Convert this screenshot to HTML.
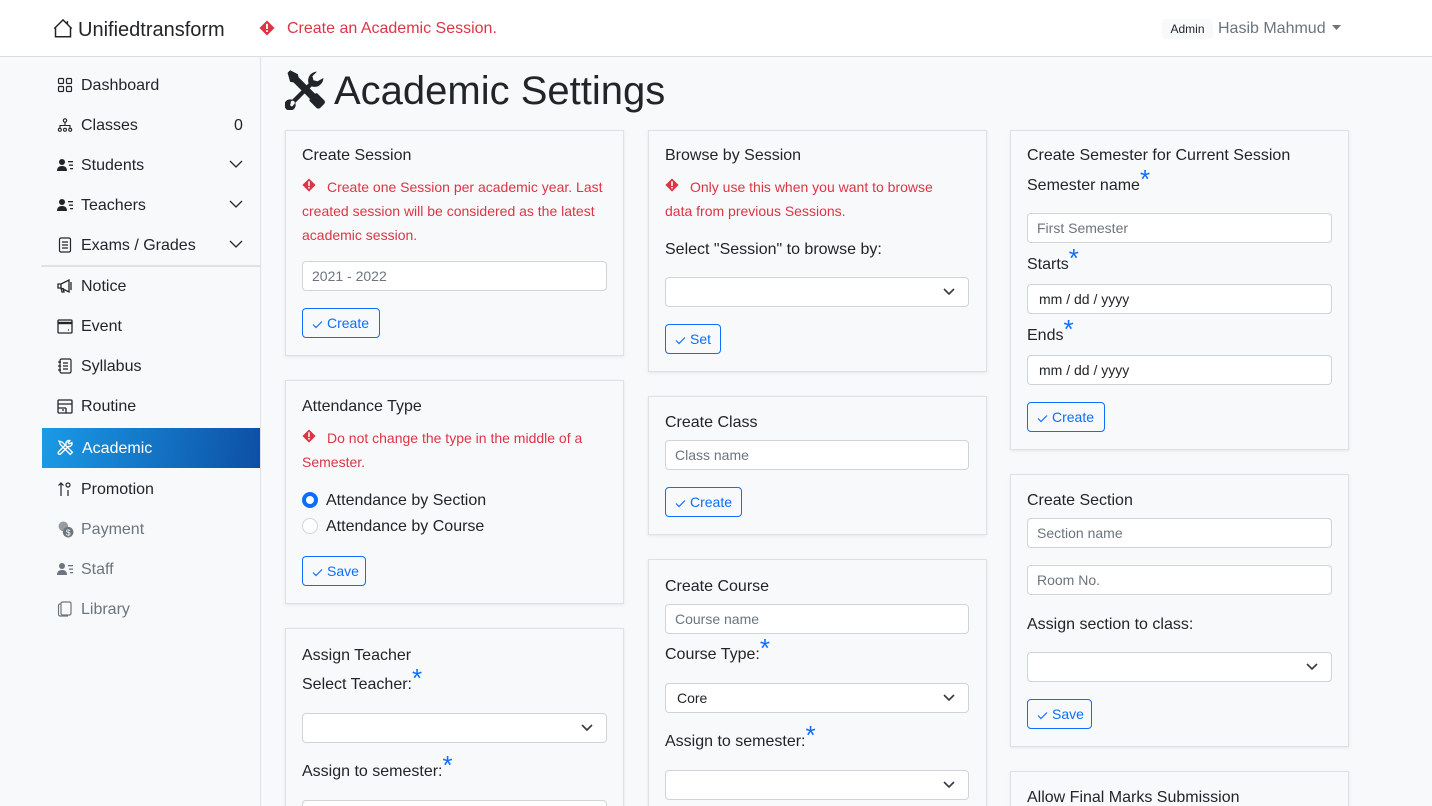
<!DOCTYPE html>
<html><head><meta charset="utf-8"><style>
*{box-sizing:border-box;margin:0;padding:0}
html{width:1432px;height:806px;overflow:hidden}
body{width:1432px;height:806px;overflow:hidden;background:#f8f9fa;font-family:"Liberation Sans",sans-serif;color:#212529;position:relative}
.a{position:absolute}
.t{position:absolute;white-space:nowrap;line-height:24px;height:25px;padding-top:1px}
.nav{left:0;top:0;width:1432px;height:57px;background:#fff;border-bottom:1px solid #dadde0}
.side{left:0;top:57px;width:261px;height:749px;border-right:1px solid #dee2e6}
.si{font-size:16px}
.card{position:absolute;background:#f8f9fa;border:1px solid #dee2e6;box-shadow:0 1px 3px rgba(0,0,0,.08)}
.h{font-size:16px}
.w{font-size:14px;color:#dc3545}
.in{position:absolute;background:#fff;border:1px solid #ced4da;border-radius:4px;height:30px;font-size:14px;color:#6c757d;padding-left:9px;line-height:29px}
.in.d{color:#212529;padding-left:11px}
.sel{position:absolute;background:#fff;border:1px solid #ced4da;border-radius:4px;height:30px;font-size:14px;padding-left:11px;line-height:29px}
.sel svg{position:absolute;right:13px;top:10px}
.btn{position:absolute;border:1px solid #0d6efd;border-radius:4px;height:30px;color:#0d6efd;font-size:14px;line-height:29px;padding-left:9px}
.btn svg{vertical-align:-1px;margin-right:4px}
.star{color:#0d6efd;font-size:26px;vertical-align:2px;line-height:0}
.ic{position:absolute}
</style></head><body>
<div class="a nav"></div>
<svg class="ic" style="left:53px;top:18px" width="20" height="20" viewBox="0 0 16 16" fill="none" stroke="#212529" stroke-width="1.2"><path d="M2 7.5V15h12V7.5M1 8.5L8 1.5l7 7M11.5 2.5v2.5"/></svg>
<div class="t" style="left:78px;top:17px;font-size:20px;line-height:24px">Unifiedtransform</div>
<svg class="ic" style="left:259px;top:20px" width="16" height="16" viewBox="0 0 16 16"><path d="M8 0.5l7.5 7.5L8 15.5 0.5 8z" fill="#dc3545"/><rect x="7.1" y="3.8" width="1.8" height="5.2" fill="#fff"/><rect x="7.1" y="10.2" width="1.8" height="1.8" fill="#fff"/></svg>
<div class="t" style="left:287px;top:16px;font-size:16px;color:#dc3545">Create an Academic Session.</div>
<div class="a" style="left:1162px;top:19px;width:51px;height:20px;background:#f8f9fa;border-radius:4px;font-size:12px;line-height:21px;text-align:center">Admin</div>
<div class="t" style="left:1218px;top:16px;font-size:16px;color:#6c757d">Hasib Mahmud</div>
<svg class="ic" style="left:1332px;top:25px" width="10" height="6"><path d="M0 0h9l-4.5 5z" fill="#6c757d"/></svg>

<div class="a side"></div>
<div class="a" style="left:41px;top:265px;width:219px;height:2px;background:#dee2e6"></div>
<div class="a" style="left:42px;top:428px;width:218px;height:40px;background:linear-gradient(100deg,#1a9be6,#0d4fa5)"></div>

<svg class="ic" style="left:57px;top:77px" width="16" height="16" viewBox="0 0 16 16" fill="none" stroke="#212529" stroke-width="1.2"><rect x="1.5" y="1.5" width="5" height="5" rx="1"/><rect x="9.5" y="1.5" width="5" height="5" rx="1"/><rect x="1.5" y="9.5" width="5" height="5" rx="1"/><rect x="9.5" y="9.5" width="5" height="5" rx="1"/></svg>
<svg class="ic" style="left:57px;top:117px" width="16" height="16" viewBox="0 0 16 16" fill="none" stroke="#212529" stroke-width="1.1"><circle cx="8" cy="3.5" r="1.7"/><path d="M8 5.3v3M3 11V8.5h10V11"/><circle cx="2.8" cy="12.8" r="1.5"/><circle cx="8" cy="12.8" r="1.5"/><circle cx="13.2" cy="12.8" r="1.5"/></svg>
<svg class="ic" style="left:57px;top:157px" width="17" height="16" viewBox="0 0 17 16" fill="#212529"><circle cx="5" cy="5" r="3"/><path d="M0 14c0-4 2.5-5 5-5s5 1 5 5z"/><rect x="11" y="4" width="5" height="1.3"/><rect x="12" y="7.5" width="4" height="1.3"/><rect x="13" y="11" width="3" height="1.3"/></svg>
<svg class="ic" style="left:57px;top:197px" width="17" height="16" viewBox="0 0 17 16" fill="#212529"><circle cx="5" cy="5" r="3"/><path d="M0 14c0-4 2.5-5 5-5s5 1 5 5z"/><rect x="11" y="4" width="5" height="1.3"/><rect x="12" y="7.5" width="4" height="1.3"/><rect x="13" y="11" width="3" height="1.3"/></svg>
<svg class="ic" style="left:57px;top:237px" width="16" height="16" viewBox="0 0 16 16" fill="none" stroke="#212529" stroke-width="1.2"><rect x="2.5" y="1" width="11" height="14" rx="1.5"/><path d="M5 5h6M5 8h6M5 11h6"/></svg>
<svg class="ic" style="left:57px;top:278px" width="16" height="16" viewBox="0 0 16 16" fill="none" stroke="#212529" stroke-width="1.3"><path d="M1 6h3l8-4v12l-8-4H1zM4 6v4M4 10l1 4h2l-1-4M14 4v8"/></svg>
<svg class="ic" style="left:57px;top:318px" width="16" height="16" viewBox="0 0 16 16" fill="none" stroke="#212529" stroke-width="1.3"><rect x="1" y="2" width="14" height="13" rx="1"/><path d="M1 5h14" stroke-width="2.4"/><path d="M11 12h1"/></svg>
<svg class="ic" style="left:57px;top:358px" width="16" height="16" viewBox="0 0 16 16" fill="none" stroke="#212529" stroke-width="1.2"><rect x="3" y="1" width="11" height="14" rx="1.5"/><path d="M1 4h3M1 8h3M1 12h3M6 5h5M6 8h5M6 11h5"/></svg>
<svg class="ic" style="left:57px;top:398px" width="16" height="16" viewBox="0 0 16 16" fill="none" stroke="#212529" stroke-width="1.3"><rect x="1" y="2" width="14" height="13" rx="1"/><path d="M1 6h14M1 10h8M9 10v5M5 12h2"/></svg>
<svg class="ic" style="left:57px;top:439px" width="17" height="17" viewBox="0 0 16 16" fill="none" stroke="#fff" stroke-width="1.3"><path d="M2 2l3 1 8 8 1.5 1.5-2 2L11 13 3 5z"/><path d="M14 3.5a2.8 2.8 0 0 1-3.5 3.5L3.5 14a1.3 1.3 0 0 1-2-2l7-7A2.8 2.8 0 0 1 12 1.5l-1.5 2 1 1z"/></svg>
<svg class="ic" style="left:57px;top:481px" width="16" height="16" viewBox="0 0 16 16" fill="none" stroke="#212529" stroke-width="1.2"><path d="M4 15V2M1.5 4.5L4 2l2.5 2.5M11 9v6"/><circle cx="11" cy="4" r="2"/></svg>
<svg class="ic" style="left:57px;top:521px" width="17" height="17" viewBox="0 0 16 16" fill="#6c757d"><circle cx="6" cy="5" r="4.5" opacity=".7"/><circle cx="10.5" cy="10.5" r="5"/><text x="8.3" y="13.5" font-size="8" fill="#fff" font-family="Liberation Sans">$</text></svg>
<svg class="ic" style="left:57px;top:561px" width="17" height="16" viewBox="0 0 17 16" fill="#6c757d"><circle cx="5" cy="5" r="3"/><path d="M0 14c0-4 2.5-5 5-5s5 1 5 5z"/><rect x="11" y="4" width="5" height="1.3"/><rect x="12" y="7.5" width="4" height="1.3"/><rect x="13" y="11" width="3" height="1.3"/></svg>
<svg class="ic" style="left:57px;top:601px" width="16" height="16" viewBox="0 0 16 16" fill="none" stroke="#6c757d" stroke-width="1.2"><rect x="4" y="1" width="10" height="13" rx="1.5"/><path d="M4 3H3a1.5 1.5 0 0 0-1.5 1.5v9A1.5 1.5 0 0 0 3 15h8"/></svg>

<div class="t si" style="left:81px;top:73px">Dashboard</div>
<div class="t si" style="left:81px;top:113px">Classes</div><div class="t si" style="left:234px;top:113px">0</div>
<div class="t si" style="left:81px;top:153px">Students</div>
<div class="t si" style="left:81px;top:193px">Teachers</div>
<div class="t si" style="left:81px;top:233px">Exams / Grades</div>
<svg class="ic" style="left:229px;top:160px" width="14" height="9" fill="none" stroke="#212529" stroke-width="1.3"><path d="M1 1l6 6 6-6"/></svg>
<svg class="ic" style="left:229px;top:200px" width="14" height="9" fill="none" stroke="#212529" stroke-width="1.3"><path d="M1 1l6 6 6-6"/></svg>
<svg class="ic" style="left:229px;top:240px" width="14" height="9" fill="none" stroke="#212529" stroke-width="1.3"><path d="M1 1l6 6 6-6"/></svg>
<div class="t si" style="left:81px;top:274px">Notice</div>
<div class="t si" style="left:81px;top:314px">Event</div>
<div class="t si" style="left:81px;top:354px">Syllabus</div>
<div class="t si" style="left:81px;top:394px">Routine</div>
<div class="t si" style="left:82px;top:436px;color:#fff">Academic</div>
<div class="t si" style="left:81px;top:477px">Promotion</div>
<div class="t si" style="left:81px;top:517px;color:#6c757d">Payment</div>
<div class="t si" style="left:81px;top:557px;color:#6c757d">Staff</div>
<div class="t si" style="left:81px;top:597px;color:#6c757d">Library</div>

<svg class="ic" style="left:285px;top:69px" width="41" height="41" viewBox="0 0 16 16" fill="#212529"><path d="M1 1.5L2 .5l3 1.5 .3 1.2 6.4 6.4.8-.2 2.8 2.8a1 1 0 0 1 0 1.4l-1.6 1.6a1 1 0 0 1-1.4 0L9.5 12.4l.2-.8L3.3 5.2 2 5z"/><path d="M15 3.5a3.5 3.5 0 0 1-4.6 3.3L4 13.2A2.2 2.2 0 1 1 2.8 12L9.2 5.6A3.5 3.5 0 0 1 12.5 1l-1.8 1.8.4 1.6 1.6.4zM3 13.5a.6.6 0 1 0 .1.1z" /><circle cx="3" cy="13.2" r=".8" fill="#f8f9fa"/></svg>
<div class="t" style="left:334px;top:66px;font-size:40px;line-height:48px;height:50px">Academic Settings</div>

<div class="card" style="left:285px;top:130px;width:339px;height:226px"></div>
<div class="t h" style="left:302px;top:143px">Create Session</div>
<svg class="ic" style="left:302px;top:178px" width="14" height="14" viewBox="0 0 16 16"><path d="M8 0.5l7.5 7.5L8 15.5 0.5 8z" fill="#dc3545"/><rect x="7.1" y="3.8" width="1.8" height="5.2" fill="#fff"/><rect x="7.1" y="10.2" width="1.8" height="1.8" fill="#fff"/></svg>
<div class="t w" style="left:327px;top:174px">Create one Session per academic year. Last</div>
<div class="t w" style="left:302px;top:198px">created session will be considered as the latest</div>
<div class="t w" style="left:302px;top:222px">academic session.</div>
<div class="in" style="left:302px;top:261px;width:305px">2021 - 2022</div>
<div class="btn" style="left:302px;top:308px;width:78px"><svg width="11" height="9" fill="none" stroke="#0d6efd" stroke-width="1.2"><path d="M1 4.5l3 3 6-6"/></svg>Create</div>

<div class="card" style="left:285px;top:380px;width:339px;height:224px"></div>
<div class="t h" style="left:302px;top:394px">Attendance Type</div>
<svg class="ic" style="left:302px;top:429px" width="14" height="14" viewBox="0 0 16 16"><path d="M8 0.5l7.5 7.5L8 15.5 0.5 8z" fill="#dc3545"/><rect x="7.1" y="3.8" width="1.8" height="5.2" fill="#fff"/><rect x="7.1" y="10.2" width="1.8" height="1.8" fill="#fff"/></svg>
<div class="t w" style="left:327px;top:425px">Do not change the type in the middle of a</div>
<div class="t w" style="left:302px;top:449px">Semester.</div>
<div class="a" style="left:302px;top:492px;width:16px;height:16px;border-radius:50%;background:#fff;border:4.5px solid #0d6efd"></div>
<div class="a" style="left:302px;top:518px;width:16px;height:16px;border-radius:50%;background:#fff;border:1px solid #ced4da"></div>
<div class="t h" style="left:326px;top:488px">Attendance by Section</div>
<div class="t h" style="left:326px;top:514px">Attendance by Course</div>
<div class="btn" style="left:302px;top:556px;width:64px"><svg width="11" height="9" fill="none" stroke="#0d6efd" stroke-width="1.2"><path d="M1 4.5l3 3 6-6"/></svg>Save</div>

<div class="card" style="left:285px;top:628px;width:339px;height:200px"></div>
<div class="t h" style="left:302px;top:643px">Assign Teacher</div>
<div class="t h" style="left:302px;top:672px">Select Teacher:<span class="star">*</span></div>
<div class="sel" style="left:302px;top:713px;width:305px"><svg width="12" height="8" fill="none" stroke="#343a40" stroke-width="1.6"><path d="M1 1l5 5 5-5"/></svg></div>
<div class="t h" style="left:302px;top:759px">Assign to semester:<span class="star">*</span></div>
<div class="sel" style="left:302px;top:800px;width:305px"></div>

<div class="card" style="left:648px;top:130px;width:339px;height:242px"></div>
<div class="t h" style="left:665px;top:143px">Browse by Session</div>
<svg class="ic" style="left:665px;top:178px" width="14" height="14" viewBox="0 0 16 16"><path d="M8 0.5l7.5 7.5L8 15.5 0.5 8z" fill="#dc3545"/><rect x="7.1" y="3.8" width="1.8" height="5.2" fill="#fff"/><rect x="7.1" y="10.2" width="1.8" height="1.8" fill="#fff"/></svg>
<div class="t w" style="left:690px;top:174px">Only use this when you want to browse</div>
<div class="t w" style="left:665px;top:198px">data from previous Sessions.</div>
<div class="t h" style="left:665px;top:237px">Select "Session" to browse by:</div>
<div class="sel" style="left:665px;top:277px;width:304px"><svg width="12" height="8" fill="none" stroke="#343a40" stroke-width="1.6"><path d="M1 1l5 5 5-5"/></svg></div>
<div class="btn" style="left:665px;top:324px;width:56px"><svg width="11" height="9" fill="none" stroke="#0d6efd" stroke-width="1.2"><path d="M1 4.5l3 3 6-6"/></svg>Set</div>

<div class="card" style="left:648px;top:396px;width:339px;height:139px"></div>
<div class="t h" style="left:665px;top:410px">Create Class</div>
<div class="in" style="left:665px;top:440px;width:304px">Class name</div>
<div class="btn" style="left:665px;top:487px;width:77px"><svg width="11" height="9" fill="none" stroke="#0d6efd" stroke-width="1.2"><path d="M1 4.5l3 3 6-6"/></svg>Create</div>

<div class="card" style="left:648px;top:559px;width:339px;height:270px"></div>
<div class="t h" style="left:665px;top:574px">Create Course</div>
<div class="in" style="left:665px;top:604px;width:304px">Course name</div>
<div class="t h" style="left:665px;top:642px">Course Type:<span class="star">*</span></div>
<div class="sel" style="left:665px;top:683px;width:304px">Core<svg width="12" height="8" fill="none" stroke="#343a40" stroke-width="1.6"><path d="M1 1l5 5 5-5"/></svg></div>
<div class="t h" style="left:665px;top:729px">Assign to semester:<span class="star">*</span></div>
<div class="sel" style="left:665px;top:770px;width:304px"><svg width="12" height="8" fill="none" stroke="#343a40" stroke-width="1.6"><path d="M1 1l5 5 5-5"/></svg></div>

<div class="card" style="left:1010px;top:130px;width:339px;height:320px"></div>
<div class="t h" style="left:1027px;top:143px">Create Semester for Current Session</div>
<div class="t h" style="left:1027px;top:173px">Semester name<span class="star">*</span></div>
<div class="in" style="left:1027px;top:213px;width:305px">First Semester</div>
<div class="t h" style="left:1027px;top:252px">Starts<span class="star">*</span></div>
<div class="in d" style="left:1027px;top:284px;width:305px">mm / dd / yyyy</div>
<div class="t h" style="left:1027px;top:323px">Ends<span class="star">*</span></div>
<div class="in d" style="left:1027px;top:355px;width:305px">mm / dd / yyyy</div>
<div class="btn" style="left:1027px;top:402px;width:78px"><svg width="11" height="9" fill="none" stroke="#0d6efd" stroke-width="1.2"><path d="M1 4.5l3 3 6-6"/></svg>Create</div>

<div class="card" style="left:1010px;top:474px;width:339px;height:273px"></div>
<div class="t h" style="left:1027px;top:488px">Create Section</div>
<div class="in" style="left:1027px;top:518px;width:305px">Section name</div>
<div class="in" style="left:1027px;top:565px;width:305px">Room No.</div>
<div class="t h" style="left:1027px;top:612px">Assign section to class:</div>
<div class="sel" style="left:1027px;top:652px;width:305px"><svg width="12" height="8" fill="none" stroke="#343a40" stroke-width="1.6"><path d="M1 1l5 5 5-5"/></svg></div>
<div class="btn" style="left:1027px;top:699px;width:65px"><svg width="11" height="9" fill="none" stroke="#0d6efd" stroke-width="1.2"><path d="M1 4.5l3 3 6-6"/></svg>Save</div>

<div class="card" style="left:1010px;top:771px;width:339px;height:60px"></div>
<div class="t h" style="left:1027px;top:785px">Allow Final Marks Submission</div>
</body></html>
